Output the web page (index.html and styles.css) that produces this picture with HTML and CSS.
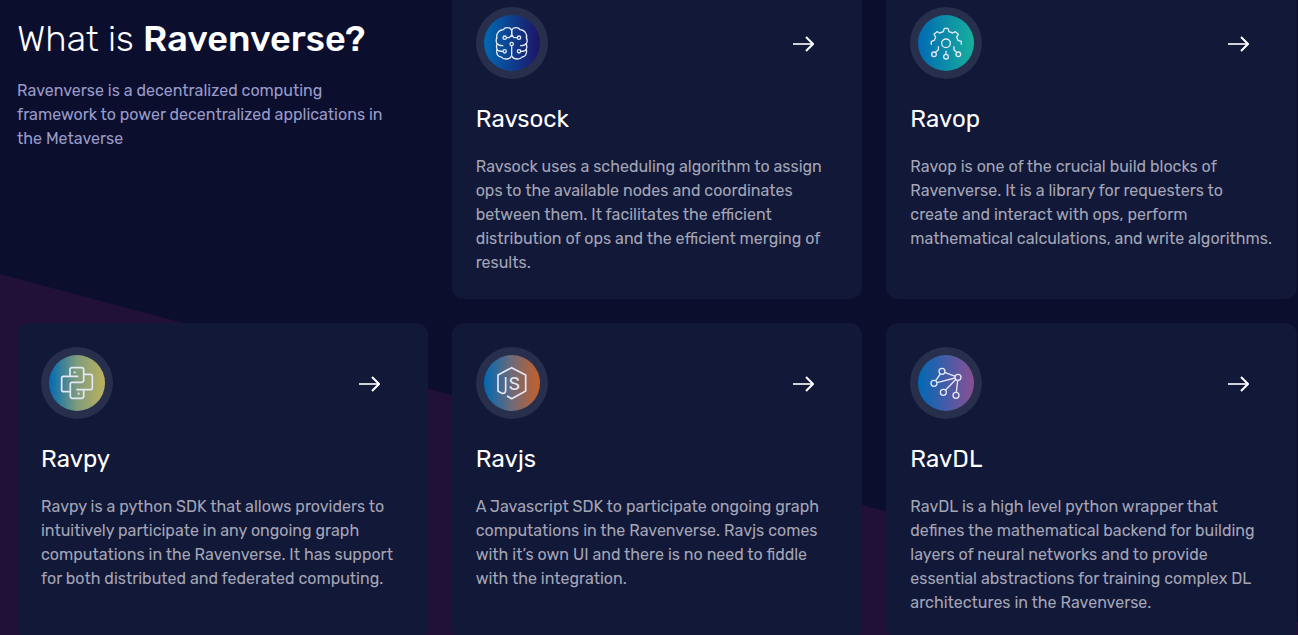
FILE: index.html
```html
<!DOCTYPE html>
<html lang="en">
  <head>
    <meta charset="utf-8">
    <meta name="viewport" content="width=device-width, initial-scale=1">
    <title>Ravenverse</title>
    <link rel="stylesheet" href="styles.css">
  </head>

  <body>
    <main class="about">
      <div class="about-grid">

        <div class="intro">
          <h1>What is <strong>Ravenverse?</strong></h1>
          <p>Ravenverse is a decentralized computing framework to power decentralized applications in the Metaverse</p>
        </div>

        <article class="card">
          <div class="card-top">
            <div class="badge">
              <div class="badge-disc ravsock">
                <svg class="glyph" viewBox="16 21 216 216" aria-hidden="true">
                  <path d="M123 108V92q-2-9-13-9q-9 0-12 6q-12 1-17 10q-5 8-2 14q-5 8 0 19q-3 8 0 15q-3 11 2 18q4 6 11 6q4 6 14 6q12 0 16-8"/>
                  <path d="M123 108V92q2-9 13-9q9 0 12 6q12 1 17 10q5 8 2 14q5 8 0 19q3 8 0 15q3 11-2 18q-4 6-11 6q-4 6-14 6q-12 0-16-8"/>
                  <path d="M107 113h9l7-8l7 8h10M123 137v33M79 130q5 8 19 7M167 130q-5 8-19 7M79 148q3 6 18 6M167 148q-3 6-17 6"/>
                  <circle cx="102" cy="113" r="5"/>
                  <circle cx="145" cy="113" r="5"/>
                  <circle cx="123" cy="132" r="5"/>
                  <circle cx="102" cy="154" r="5"/>
                  <circle cx="145" cy="154" r="5"/>
                </svg>
              </div>
            </div>
            <a class="arrow" href="#ravsock" aria-label="Open Ravsock">
              <svg viewBox="0 0 24 24" aria-hidden="true"><path class="shaft" d="M3 13h19"/><path d="M16 6l7 7l-7 7"/></svg>
            </a>
          </div>
          <h2>Ravsock</h2>
          <p>Ravsock uses a scheduling algorithm to assign ops to the available nodes and coordinates between them. It facilitates the efficient distribution of ops and the efficient merging of results.</p>
        </article>

        <article class="card">
          <div class="card-top">
            <div class="badge">
              <div class="badge-disc ravop">
                <svg class="glyph" viewBox="16 21 216 216" aria-hidden="true">
                  <path d="M80 134V124L89 121L93 111L88 103L97 95L105 99L116 95L119 85H130L133 95L144 99L152 95L161 103L156 111L160 121L170 124V134"/>
                  <circle cx="124" cy="130" r="13"/>
                  <path d="M101 139v11l-9 7M124 152v11M148 139v11l8 7"/>
                  <circle cx="88" cy="163" r="7"/>
                  <circle cx="124" cy="170" r="7"/>
                  <circle cx="161" cy="163" r="7"/>
                </svg>
              </div>
            </div>
            <a class="arrow" href="#ravop" aria-label="Open Ravop">
              <svg viewBox="0 0 24 24" aria-hidden="true"><path class="shaft" d="M3 13h19"/><path d="M16 6l7 7l-7 7"/></svg>
            </a>
          </div>
          <h2>Ravop</h2>
          <p>Ravop is one of the crucial build blocks of Ravenverse. It is a library for requesters to create and interact with ops, perform mathematical calculations, and write algorithms.</p>
        </article>

        <article class="card">
          <div class="card-top">
            <div class="badge">
              <div class="badge-disc ravpy">
                <svg class="glyph" viewBox="18 21 216 216" aria-hidden="true">
                  <path d="M105 108V89q0-6 6-6h29q6 0 6 6v32q0 6-6 6h-28q-6 0-6 6v36q0 6 6 6h28q6 0 6-6v-19"/>
                  <path d="M130 109H86q-6 0-6 6v34q0 6 6 6h19"/>
                  <path d="M147 103h19q6 0 6 6v34q0 6-6 6h-42"/>
                  <path d="M116 97h6M128 161h6"/>
                </svg>
              </div>
            </div>
            <a class="arrow" href="#ravpy" aria-label="Open Ravpy">
              <svg viewBox="0 0 24 24" aria-hidden="true"><path class="shaft" d="M3 13h19"/><path d="M16 6l7 7l-7 7"/></svg>
            </a>
          </div>
          <h2>Ravpy</h2>
          <p>Ravpy is a python SDK that allows providers to intuitively participate in any ongoing graph computations in the Ravenverse. It has support for both distributed and federated computing.</p>
        </article>

        <article class="card">
          <div class="card-top">
            <div class="badge">
              <div class="badge-disc ravjs">
                <svg class="glyph" viewBox="16 21 216 216" aria-hidden="true">
                  <path d="M105 111v38q0 12-10 11q-3 0-13-7v-48l41-22l42 22v48l-42 23l-14-8"/>
                  <text x="114" y="149">S</text>
                </svg>
              </div>
            </div>
            <a class="arrow" href="#ravjs" aria-label="Open Ravjs">
              <svg viewBox="0 0 24 24" aria-hidden="true"><path class="shaft" d="M3 13h19"/><path d="M16 6l7 7l-7 7"/></svg>
            </a>
          </div>
          <h2>Ravjs</h2>
          <p>A Javascript SDK to participate ongoing graph computations in the Ravenverse. Ravjs comes with it’s own UI and there is no need to fiddle with the integration.</p>
        </article>

        <article class="card">
          <div class="card-top">
            <div class="badge">
              <div class="badge-disc ravdl">
                <svg class="glyph" viewBox="16 21 216 216" aria-hidden="true">
                  <path d="M120 97l32 12M107 102L93 122M97 128l54-14M154 118l-32 33M159 121l-4 36"/>
                  <circle cx="112" cy="94" r="9"/>
                  <circle cx="160" cy="112" r="9"/>
                  <circle cx="88" cy="130" r="9"/>
                  <circle cx="116" cy="157" r="9"/>
                  <circle cx="154" cy="166" r="9"/>
                </svg>
              </div>
            </div>
            <a class="arrow" href="#ravdl" aria-label="Open RavDL">
              <svg viewBox="0 0 24 24" aria-hidden="true"><path class="shaft" d="M3 13h19"/><path d="M16 6l7 7l-7 7"/></svg>
            </a>
          </div>
          <h2>RavDL</h2>
          <p>RavDL is a high level python wrapper that defines the mathematical backend for building layers of neural networks and to provide essential abstractions for training complex DL architectures in the Ravenverse.</p>
        </article>

      </div>
    </main>
  </body>
</html>
```
FILE: styles.css
```css
* {
  box-sizing: border-box;
}
body {
  margin: 0;
  background-color: #0c0e2e;
  color: #ffffff;
  font-family: Rubik, Roboto, sans-serif;
  font-size: 16px;
  line-height: 24px;
}
h1, h2, p {
  margin: 0;
}
.about {
  position: relative;
  overflow: hidden;
  min-height: 100vh;
  padding: 0 1px 0 17px;
}
/* slanted purple band behind the cards */
.about::before {
  content: '';
  position: absolute;
  top: 274px; left: 0;
  width: 100%; height: 100%;
  background-color: #211138;
  transform: skewY(15deg);
  transform-origin: 0 0;
}
.about-grid {
  position: relative;
  display: grid;
  grid-template-columns: repeat(3, 1fr);
  gap: 24px;
  margin-top: -17px;
}
.intro {
  padding: 32px 24px 0 0;
}
.intro h1 {
  font-size: 36px; font-weight: 300;
  line-height: 48px;
  margin-bottom: 16px;
}
.intro h1 strong {
  font-weight: 500;
}
.intro p {
  color: #989bc8;
}
.card {
  padding: 24px;
  border-radius: 12px;
  background-color: #121838;
}
.card-top {
  display: flex;
  align-items: center;
  justify-content: space-between;
  margin-bottom: 24px;
}
.card h2 {
  font-size: 24px; font-weight: 400;
  line-height: 32px;
  margin-bottom: 20px;
}
.card p {
  color: #a3a5b6;
}
.badge {
  display: flex;
  align-items: center;
  justify-content: center;
  width: 72px; height: 72px;
  border-radius: 50%;
  background-color: #282f4c;
}
.badge-disc {
  display: flex;
  align-items: center;
  justify-content: center;
  width: 56px; height: 56px;
  border-radius: 50%;
}
.ravsock {
  background: linear-gradient(90deg, #0069b4, #1d1466);
}
.ravop {
  background: linear-gradient(90deg, #0069b4, #18b09c);
}
.ravpy {
  background: linear-gradient(90deg, #0069b4, #7f9c7c 50%, #bbb25e);
}
.ravjs {
  background: linear-gradient(90deg, #0069b4, #706a78 50%, #c65f28);
}
.ravdl {
  background: linear-gradient(90deg, #0069b4, #455ca8 50%, #8a4f92);
}
.glyph {
  flex: none;
  width: 72px; height: 72px;
  fill: none;
  stroke: #e3e8f4;
  stroke-width: 4;
  stroke-linejoin: round;
}
.ravpy .glyph, .ravjs .glyph {
  stroke-width: 5;
}
.glyph text {
  fill: #e3e8f4;
  stroke: none;
  font-size: 54px;
}
.arrow {
  margin-right: 24px;
}
.arrow svg {
  display: block;
  width: 24px; height: 24px;
  fill: none;
  stroke: #ffffff;
  stroke-width: 2;
}
.arrow .shaft {
  stroke: #d0d1d7;
}
```
